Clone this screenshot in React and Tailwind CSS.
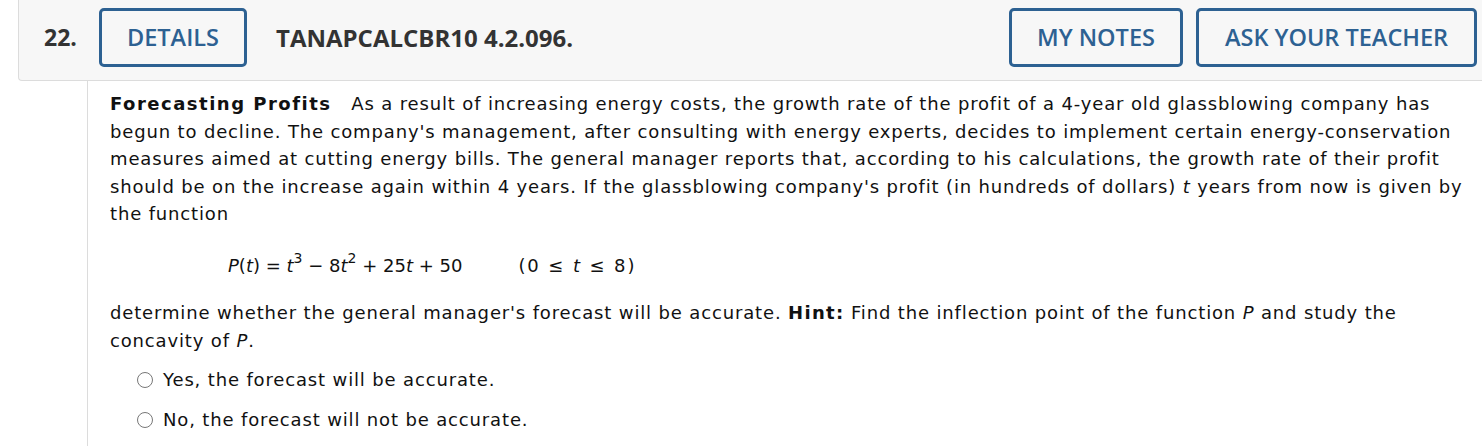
export default function App() {
  const btn =
    'h-[59px] flex items-center justify-center border-[3px] border-[#2d6192] rounded-[5px] text-[#2d6192] font-semibold text-[23.5px]';
  return (
    <div className="w-[1482px] h-[446px] bg-white overflow-hidden" style={{ fontFamily: '"DejaVu Sans", Verdana, sans-serif' }}>
      <div
        className="ml-[18px] -mr-[10px] h-[81px] pt-[8px] bg-[#f7f7f7] border-l border-b border-[#dcdcdc] rounded-bl-[4px] flex items-start"
        style={{ fontFamily: '"Open Sans", sans-serif' }}
      >
        <div className="h-[59px] flex items-center ml-[25px] w-[55px] text-[23px] font-bold text-[#333]">22.</div>
        <button className={`${btn} w-[148px]`}>DETAILS</button>
        <div className="h-[59px] flex items-center ml-[29px] text-[24px] font-bold text-[#333]">TANAPCALCBR10 4.2.096.</div>
        <div className="flex-1" />
        <button className={`${btn} w-[174px]`}>MY NOTES</button>
        <button className={`${btn} w-[281px] ml-[13px] mr-[15px]`}>ASK YOUR TEACHER</button>
      </div>
      <div className="ml-[87px] border-l border-[#dcdcdc] h-[365px] pl-[22px] pt-[9px] text-[18px] tracking-[0.85px] leading-[27.5px] text-[#111] whitespace-nowrap">
        <p>
          <b className="tracking-[1.5px]">Forecasting Profits</b>&nbsp;&nbsp; As a result of increasing energy costs, the growth rate of the profit of a 4-year old glassblowing company has
          <br />
          begun to decline. The company's management, after consulting with energy experts, decides to implement certain energy-conservation
          <br />
          measures aimed at cutting energy bills. The general manager reports that, according to his calculations, the growth rate of their profit
          <br />
          should be on the increase again within 4 years. If the glassblowing company's profit (in hundreds of dollars) <i>t</i> years from now is given by
          <br />
          the function
        </p>
        <p className="mt-[24px] ml-[118px] tracking-normal">
          <i>P</i>(<i>t</i>) = <i>t</i>
          <sup className="text-[14px] -top-[9px]">3</sup> − 8<i>t</i>
          <sup className="text-[14px] -top-[9px]">2</sup> + 25<i>t</i> + 50
          <span className="ml-[56px] tracking-[1.9px]">(0 ≤ <i>t</i> ≤ 8)</span>
        </p>
        <p className="mt-[20px]">
          determine whether the general manager's forecast will be accurate. <b className="tracking-[1.3px]">Hint:</b> Find the inflection point of the function <i>P</i> and study the
          <br />
          concavity of <i>P</i>.
        </p>
        <div className="mt-[12px] ml-[27px] flex flex-col gap-[12.5px]">
          {['Yes, the forecast will be accurate.', 'No, the forecast will not be accurate.'].map((t) => (
            <label key={t} className="flex items-center gap-[10px] h-[27.5px]">
              <span className="w-[16px] h-[16px] rounded-full border border-[#777] bg-white" />
              <span>{t}</span>
            </label>
          ))}
        </div>
      </div>
    </div>
  );
}
